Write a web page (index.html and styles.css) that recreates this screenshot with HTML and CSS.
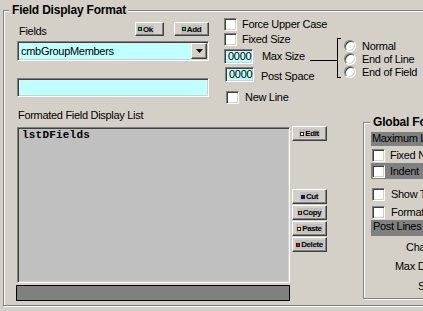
FILE: index.html
```html
<!DOCTYPE html>
<html lang="en">
<head>
    <meta charset="UTF-8">
    <title>Field Display Format</title>
    <link rel="stylesheet" href="styles.css">
</head>
<body>
    <div class="frame">
        <div class="frame-title">Field Display Format</div>
        <div class="top">
            <div class="fields">
                <div class="fields-head">
                    <span class="lbl">Fields</span>
                    <button class="btn btn-ok"><span class="cap"><i class="dot dot--green"></i>Ok</span></button>
                    <button class="btn btn-add"><span class="cap"><i class="dot dot--green"></i>Add</span></button>
                </div>
                <div class="combo">
                    <span class="combo-text">cmbGroupMembers</span>
                    <span class="combo-drop"><svg width="7" height="4" viewBox="0 0 7 4"><polygon points="0,0 7,0 3.5,4" fill="#000"/></svg></span>
                </div>
                <div class="edit"></div>
            </div>
            <div class="opts">
                <div class="chk opt-1"><span class="box"></span><span class="chk-text">Force Upper Case</span></div>
                <div class="chk opt-2"><span class="box"></span><span class="chk-text">Fixed Size</span></div>
                <div class="num-row opt-3">
                    <span class="num">0000</span>
                    <span class="num-lbl">Max Size</span>
                    <span class="link"></span>
                </div>
                <div class="num-row opt-4">
                    <span class="num">0000</span>
                    <span class="num-lbl">Post Space</span>
                </div>
                <div class="chk opt-5"><span class="box"></span><span class="chk-text">New Line</span></div>
                <div class="radios">
                    <span class="bracket"></span>
                    <div class="radio-list">
                        <div class="radio"><span class="dotr"></span>Normal</div>
                        <div class="radio"><span class="dotr"></span>End of Line</div>
                        <div class="radio"><span class="dotr"></span>End of Field</div>
                    </div>
                </div>
            </div>
        </div>
        <div class="bottom">
            <div class="list-col">
                <div class="lbl list-lbl">Formated Field Display List</div>
                <div class="list">lstDFields</div>
                <div class="bar"></div>
            </div>
            <div class="btn-col">
                <button class="btn btn-side"><span class="cap"><i class="dot dot--white"></i>Edit</span></button>
                <button class="btn btn-side btn-cut"><span class="cap"><i class="dot dot--blue"></i>Cut</span></button>
                <button class="btn btn-side"><span class="cap"><i class="dot dot--orange"></i>Copy</span></button>
                <button class="btn btn-side"><span class="cap"><i class="dot dot--yellow"></i>Paste</span></button>
                <button class="btn btn-side"><span class="cap"><i class="dot dot--red"></i>Delete</span></button>
            </div>
            <div class="global">
                <div class="global-title">Global Format</div>
                <div class="g-band g-max">Maximum Length</div>
                <div class="chk g-fixed"><span class="box"></span><span class="chk-text">Fixed Number</span></div>
                <div class="chk g-band g-indent"><span class="box"></span><span class="chk-text">Indent</span></div>
                <div class="chk g-show"><span class="box"></span><span class="chk-text">Show Titles</span></div>
                <div class="chk g-format"><span class="box"></span><span class="chk-text">Format</span></div>
                <div class="g-band g-post">Post Lines</div>
                <div class="g-text g-cha">Characters</div>
                <div class="g-text g-maxd">Max Depth</div>
                <div class="g-text g-s">Spacing</div>
            </div>
        </div>
    </div>
</body>
</html>
```

FILE: styles.css
```css
* {
    box-sizing: border-box;
}
body {
    margin: 0;
    width: 423px;
    height: 311px;
    overflow: hidden;
    background: #d4d0c8;
    font: 11px "Liberation Sans", Arial, sans-serif;
    letter-spacing: -0.3px;
    color: #000;
}
.frame {
    position: relative;
    width: 440px;
    height: 296px;
    margin: 10px 0 0 3px;
    padding-left: 13px;
    border: 1px solid #808080;
    box-shadow: inset 1px 1px 0 #fff, 1px 1px 0 #fff;
}
.frame-title, .global-title {
    position: absolute;
    top: -8px;
    padding: 0 2px 0 3px;
    background: #d4d0c8;
    font-weight: bold;
    font-size: 12px;
    line-height: 14px;
    letter-spacing: -0.2px;
}
.frame-title { left: 5px; }
.global-title { left: 6px; }

/* top part */
.top {
    display: flex;
    align-items: flex-start;
}
.fields {
    width: 192px;
    margin-top: 11px;
}
.fields-head {
    display: flex;
    height: 16px;
}
.lbl {
    line-height: 13px;
}
.fields-head .lbl {
    margin: 3px 0 0 2px;
}
.btn {
    display: flex;
    justify-content: center;
    align-items: center;
    padding: 0;
    margin: 0;
    background: #d4d0c8;
    border: 1px solid;
    border-color: #fff #404040 #404040 #fff;
    box-shadow: inset -1px -1px 0 #808080;
    font: bold 8px "Liberation Sans", Arial, sans-serif;
    letter-spacing: -0.4px;
    color: #000;
}
.btn-ok {
    margin-left: auto;
    width: 29px;
    height: 14px;
    justify-content: flex-start;
    padding-left: 1px;
}
.btn-add {
    margin-left: 10px;
    width: 35px;
    height: 14px;
}
.cap {
    display: inline-flex;
    align-items: center;
    gap: 1px;
    height: 9px;
    padding: 0 1px;
    background: #c0c0c0;
}
.dot {
    display: block;
    width: 4px;
    height: 4px;
    border: 1px solid #202020;
}
.dot--green { background: #00ff00; }
.dot--white { background: #fff; }
.dot--blue { background: #0000ff; }
.dot--orange { background: #ff8040; }
.dot--yellow { background: #ffff00; }
.dot--red { background: #ff0000; }

.combo, .edit, .num, .list {
    border: 1px solid;
    border-color: #808080 #fff #fff #808080;
    box-shadow: inset 1px 1px 0 #404040, inset -1px -1px 0 #d4d0c8;
}
.combo {
    display: flex;
    height: 20px;
    margin-top: 3px;
    padding: 1px;
    background: #c0ffff;
}
.combo-text {
    flex: 1;
    padding: 1px 0 0 2px;
    line-height: 15px;
}
.combo-drop {
    display: flex;
    justify-content: center;
    align-items: center;
    width: 16px;
    height: 16px;
    background: #d4d0c8;
    border: 1px solid;
    border-color: #fff #404040 #404040 #fff;
    box-shadow: inset -1px -1px 0 #808080;
}
.edit {
    height: 19px;
    margin-top: 17px;
    background: #c0ffff;
}

/* options */
.opts {
    display: grid;
    grid-template-columns: 113px auto;
    grid-template-rows: 15px 16px 18px 24px 13px;
    margin: 7px 0 0 15px;
}
.chk {
    display: flex;
    align-items: flex-start;
}
.box {
    flex: none;
    width: 13px;
    height: 13px;
    background: #fff;
    border: 1px solid;
    border-color: #808080 #fff #fff #808080;
    box-shadow: inset 1px 1px 0 #404040, inset -1px -1px 0 #d4d0c8;
}
.chk-text {
    margin-left: 5px;
    line-height: 12px;
    white-space: nowrap;
}
.opt-1 { grid-area: 1 / 1; }
.opt-2 { grid-area: 2 / 1; }
.opt-3 { grid-area: 3 / 1; }
.opt-4 { grid-area: 4 / 1; margin-left: 1px; }
.opt-5 { grid-area: 5 / 1; margin-left: 2px; }
.opt-5 .chk-text { margin-left: 6px; }
.num-row {
    display: flex;
    align-items: flex-start;
    height: 15px;
}
.num {
    flex: none;
    width: 29px;
    height: 15px;
    padding-left: 3px;
    background: #c0ffff;
    line-height: 13px;
}
.num-lbl {
    margin-left: 9px;
    line-height: 15px;
    white-space: nowrap;
}
.opt-4 .num-lbl {
    margin-left: 7px;
    padding-top: 2px;
}
.link {
    flex: 1;
    height: 1px;
    margin: 11px 0 0 5px;
    background: #000;
}
.radios {
    grid-area: 2 / 2 / 5 / 3;
    display: flex;
    align-items: flex-start;
    margin-top: 5px;
}
.bracket {
    width: 4px;
    height: 40px;
    border: 1px solid #000;
    border-right: none;
}
.radio-list {
    margin-left: 3px;
    padding-top: 1px;
}
.radio {
    display: flex;
    align-items: center;
    height: 13px;
    white-space: nowrap;
}
.dotr {
    width: 12px;
    height: 12px;
    margin-right: 6px;
    border-radius: 50%;
    background: #fff;
    border: 1px solid;
    border-color: #808080 #fff #fff #808080;
    box-shadow: inset 1px 1px 0 #404040, inset -1px -1px 0 #d4d0c8;
}

/* bottom part */
.bottom {
    display: flex;
    align-items: flex-start;
    margin-top: 5px;
}
.list-col {
    width: 273px;
}
.list-lbl {
    margin-left: 1px;
}
.list {
    height: 156px;
    margin-top: 5px;
    padding: 1px 0 0 4px;
    background: #c0c0c0;
    font: bold 11px "Liberation Mono", "Courier New", monospace;
    letter-spacing: 0.2px;
    line-height: 12px;
}
.bar {
    width: 274px;
    height: 16px;
    margin: 2px 0 0 -1px;
    background: #808080;
    border: 1px solid #000;
}
.btn-col {
    display: flex;
    flex-direction: column;
    margin: 17px 0 0 2px;
}
.btn-side {
    width: 35px;
    height: 15px;
    margin-bottom: 1px;
}
.btn-cut {
    margin-top: 47px;
}

.global {
    position: relative;
    flex: none;
    width: 100px;
    height: 177px;
    margin: 13px 0 0 36px;
    padding: 9px 0 0 7px;
    border: 1px solid #808080;
    box-shadow: inset 1px 1px 0 #fff, 1px 1px 0 #fff;
}
.global > div {
    white-space: nowrap;
}
.g-band {
    background: #808080;
}
.g-max {
    height: 14px;
    padding-left: 1px;
    line-height: 12px;
}
.global .box {
    margin-left: 1px;
}
.g-fixed {
    margin-top: 3px;
}
.g-indent {
    height: 16px;
    margin-top: 1px;
    align-items: center;
}
.g-show {
    margin-top: 9px;
}
.g-show .chk-text, .g-format .chk-text {
    margin-left: 6px;
}
.g-format {
    margin-top: 5px;
}
.g-post {
    height: 16px;
    margin-top: 1px;
    padding-left: 2px;
    line-height: 13px;
}
.g-text {
    line-height: 13px;
}
.g-cha { margin-top: 5px; padding-left: 35px; }
.g-maxd { margin-top: 6px; padding-left: 24px; }
.g-s { margin-top: 7px; padding-left: 47px; }
```
